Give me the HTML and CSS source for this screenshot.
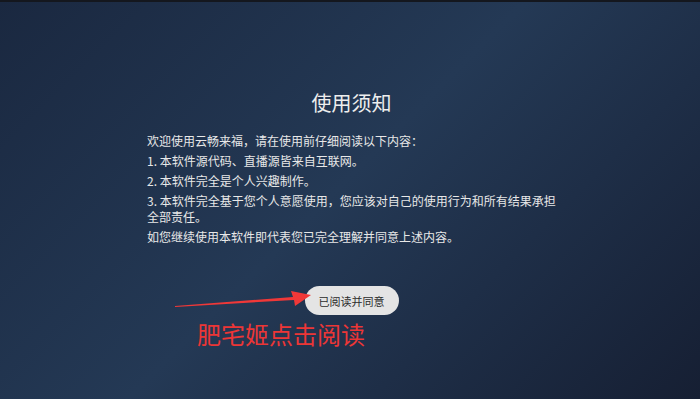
FILE: index.html
```
<!DOCTYPE html>
<html lang="zh-CN">
<head>
    <meta charset="UTF-8">
    <meta name="viewport" content="width=device-width, initial-scale=1.0">
    <title>使用须知</title>
    <link rel="stylesheet" href="styles.css">
</head>
<body>
    <div class="page">
        <div class="notice">
            <h1>使用须知</h1>
            <div class="content">
                <p>欢迎使用云畅来福，请在使用前仔细阅读以下内容：</p>
                <p>1. 本软件源代码、直播源皆来自互联网。</p>
                <p>2. 本软件完全是个人兴趣制作。</p>
                <p>3. 本软件完全基于您个人意愿使用，您应该对自己的使用行为和所有结果承担全部责任。</p>
                <p>如您继续使用本软件即代表您已完全理解并同意上述内容。</p>
            </div>
            <div class="actions">
                <button class="agree-btn">已阅读并同意</button>
                <svg class="arrow" width="140" height="24" viewBox="0 0 140 24">
                    <polygon points="0,15 118,6 116,0 136,4 120,15 119,9 0,16" fill="#f03838"/>
                </svg>
                <span class="tip">肥宅姬点击阅读</span>
            </div>
        </div>
    </div>
</body>
</html>
```

FILE: styles.css
```
html, body {
    margin: 0;
    padding: 0;
    height: 100%;
}
body {
    font-family: "Noto Sans CJK SC", "Noto Sans", sans-serif;
    background: linear-gradient(135deg, #1a2840 0%, #243955 48%, #1e2e47 70%, #161f33 100%);
    border-top: 2px solid #14171e;
    box-sizing: border-box;
    color: #e8e8e8;
}
.page {
    display: flex;
    justify-content: center;
    padding-top: 86px;
}
.notice {
    width: 412px;
    padding-left: 3px;
    box-sizing: border-box;
}
h1 {
    margin: 0 0 15px;
    text-align: center;
    font-size: 20px;
    font-weight: 400;
    line-height: 30px;
    color: #eeeeee;
}
.content p {
    margin: 0 0 4px;
    font-size: 12px;
    line-height: 16px;
}
.actions {
    position: relative;
    display: flex;
    justify-content: center;
    margin-top: 41px;
}
.agree-btn {
    height: 29px;
    padding: 0 14px;
    border: none;
    border-radius: 15px;
    background-color: #e4e4e4;
    color: #2c2c2c;
    font-family: inherit;
    font-size: 11px;
}
.arrow {
    position: absolute;
    left: 28px;
    top: 5px;
}
.tip {
    position: absolute;
    left: 50px;
    top: 34px;
    font-size: 24px;
    line-height: 28px;
    color: #ec3636;
    white-space: nowrap;
}
```
